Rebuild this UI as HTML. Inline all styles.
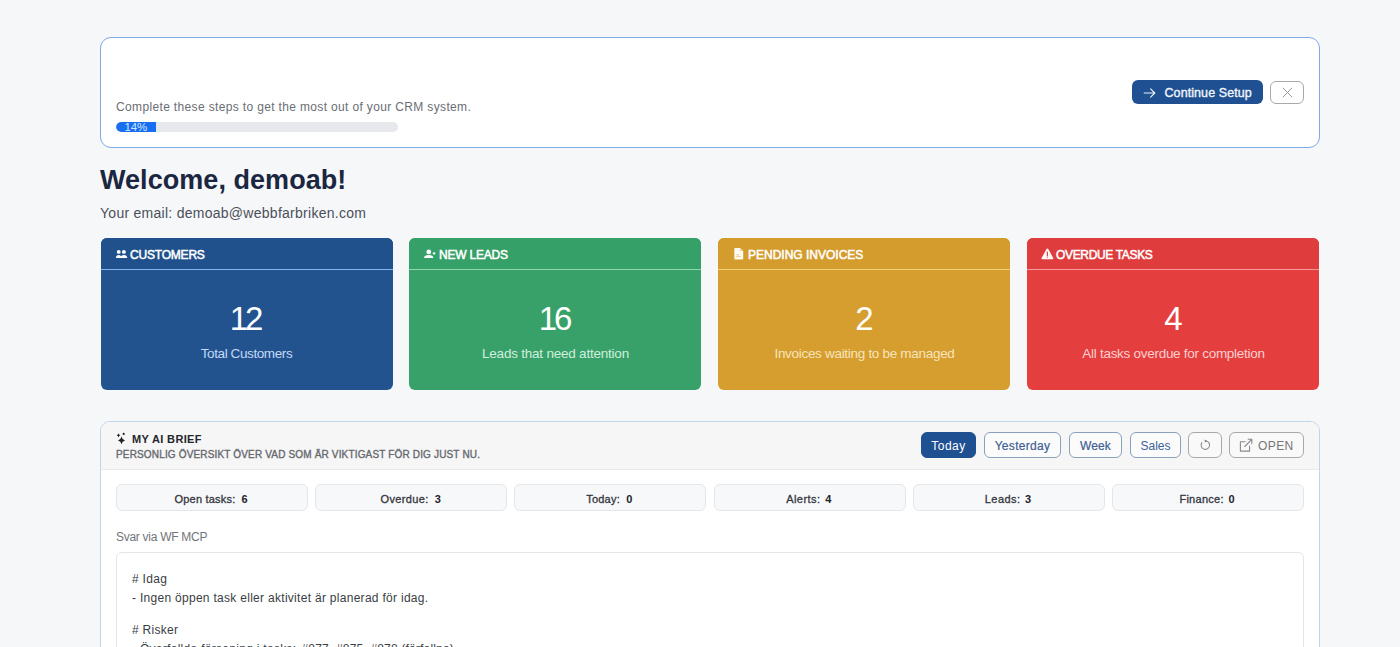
<!DOCTYPE html>
<html><head><meta charset="utf-8">
<style>
*{box-sizing:border-box;margin:0;padding:0}
html,body{width:1400px;height:647px;overflow:hidden;background:#f5f7f9;font-family:"Liberation Sans",sans-serif;color:#1a2238}
.t{position:absolute;white-space:nowrap;line-height:1}
svg{position:absolute;display:block}
#setup{position:absolute;left:100px;top:37px;width:1220px;height:111px;background:#fff;border:1px solid #80a9e8;border-radius:11px}
#bar{position:absolute;left:116px;top:122px;width:282px;height:10px;background:#e6e8ec;border-radius:5px;overflow:hidden}
#fill{position:absolute;left:0;top:0;width:40px;height:10px;background:#176ef0;border-radius:5px 0 0 5px;overflow:hidden}
#cont{position:absolute;left:1132px;top:80px;width:131px;height:24px;background:#1f5092;border-radius:6px}
#close{position:absolute;left:1270px;top:81px;width:34px;height:23px;border:1px solid #a9a9a9;border-radius:6px}
.card{position:absolute;top:238px;width:292px;height:152px;border-radius:6px;overflow:hidden}
.card .hd{position:absolute;left:0;top:0;width:100%;height:32px;border-bottom:1px solid rgba(255,255,255,.5)}
#brief{position:absolute;left:100px;top:421px;width:1220px;height:300px;border:1px solid #c2d3ea;border-radius:10px;background:#fff;overflow:hidden}
#bhd{position:absolute;left:0;top:0;width:100%;height:48px;background:#f6f6f6;border-bottom:1px solid #e9eaec}
.btn{position:absolute;top:432px;height:26px;border:1px solid #8aa0bb;border-radius:6px;background:#fbfbfc}
.pill{position:absolute;top:484px;height:27px;width:192px;background:#f7f8fa;border:1px solid #e4e6ea;border-radius:6px}
#content{position:absolute;left:116px;top:552px;width:1188px;height:200px;border:1px solid #e4e6ea;border-radius:6px;background:#fff}
.lbl{top:494px;font-size:11px;color:#33363c;-webkit-text-stroke:0.3px #33363c}
.val{top:494px;font-size:11px;font-weight:bold;color:#1f2228}
</style></head>
<body>
<div id="setup"></div>
<div class="t" style="left:116px;top:101px;font-size:12px;color:#6a6e75;letter-spacing:0.35px">Complete these steps to get the most out of your CRM system.</div>
<div id="bar"><div id="fill"><div class="t" style="left:8.5px;top:0px;font-size:11.5px;color:#d3e8ff;letter-spacing:-0.2px">14%</div></div></div>
<div id="cont"></div>
<svg style="left:1143px;top:87px" width="13" height="12" viewBox="0 0 13 12"><path d="M1.2 6H11.8M7.6 1.9L11.8 6L7.6 10.1" stroke="#eef3fb" stroke-width="1.1" fill="none" stroke-linecap="round" stroke-linejoin="round"/></svg>
<div class="t" style="left:1164.5px;top:87px;font-size:12.5px;color:#f2f6fc;letter-spacing:0.08px;-webkit-text-stroke:0.35px #f2f6fc">Continue Setup</div>
<div id="close"></div>
<svg style="left:1282px;top:87px" width="11" height="11" viewBox="0 0 11 11"><path d="M0.8 0.8L10.2 10.2M10.2 0.8L0.8 10.2" stroke="#9a9a9a" stroke-width="1" fill="none"/></svg>

<div class="t" style="left:100px;top:167px;font-size:27px;font-weight:bold;color:#1b2640;letter-spacing:0.05px">Welcome, demoab!</div>
<div class="t" style="left:100px;top:206px;font-size:14px;color:#4b505a;letter-spacing:0.27px">Your email: demoab@webbfarbriken.com</div>

<div class="card" style="left:101px;background:#22538f"><div class="hd" style="background:#21518c;border-bottom-color:#8bb4ea"></div></div>
<div class="card" style="left:409px;background:#38a169"><div class="hd" style="background:#35a067;border-bottom-color:#8ed9aa"></div></div>
<div class="card" style="left:718px;background:#d69e2e"><div class="hd" style="background:#d49c2d;border-bottom-color:#f0cf7d"></div></div>
<div class="card" style="left:1027px;background:#e53e3e"><div class="hd" style="background:#df3c3d;border-bottom-color:#f59a98"></div></div>

<!-- card header texts -->
<div class="t" style="left:130px;top:249px;font-size:12px;color:#fff;letter-spacing:-0.2px;-webkit-text-stroke:0.5px #fff">CUSTOMERS</div>
<div class="t" style="left:439px;top:249px;font-size:12px;color:#fff;letter-spacing:-0.2px;-webkit-text-stroke:0.5px #fff">NEW LEADS</div>
<div class="t" style="left:748px;top:249px;font-size:12px;color:#fff;letter-spacing:0px;-webkit-text-stroke:0.5px #fff">PENDING INVOICES</div>
<div class="t" style="left:1056px;top:249px;font-size:12px;color:#fff;letter-spacing:-0.34px;-webkit-text-stroke:0.5px #fff">OVERDUE TASKS</div>

<!-- icons -->
<svg style="left:115px;top:249px" width="13" height="10" viewBox="0 0 13 10"><circle cx="3.7" cy="2.9" r="1.95" fill="#fff"/><circle cx="8.9" cy="2.9" r="1.95" fill="#fff"/><path d="M0.9 9.1C0.9 7.1 2.1 5.9 3.7 5.9S6.5 7.1 6.5 9.1Z" fill="#fff"/><path d="M5.6 9.1C5.6 7.1 7 5.9 8.9 5.9S12.3 7.1 12.3 9.1Z" fill="#fff"/></svg>
<svg style="left:423px;top:249px" width="13" height="10" viewBox="0 0 13 10"><circle cx="5.8" cy="2.9" r="2.4" fill="#fff"/><path d="M1 9C1 7 2.8 5.9 5.8 5.9S10.3 7 10.3 9Z" fill="#fff"/><path d="M11.1 3.1V5.7M9.8 4.4H12.4" stroke="#f0fff6" stroke-width="1.1"/></svg>
<svg style="left:734px;top:248px" width="10" height="12" viewBox="0 0 10 12"><path d="M0.3 1C0.3 0.5 0.7 0.1 1.2 0.1H6.2L9.2 3.1V10.8C9.2 11.3 8.8 11.6 8.3 11.6H1.2C0.7 11.6 0.3 11.3 0.3 10.8Z" fill="#fffbf0"/><path d="M6.2 0.1V3.1H9.2" fill="#eccf8d"/><path d="M2.2 6.8H5M2.2 8.6H6.8" stroke="#e4c37a" stroke-width="0.8"/></svg>
<svg style="left:1041px;top:248px" width="13" height="12" viewBox="0 0 13 12"><path d="M6.4 0.5C6.8 0.5 7.1 0.7 7.3 1L12.2 10C12.5 10.6 12.1 11.2 11.4 11.2H1.4C0.7 11.2 0.3 10.6 0.6 10L5.5 1C5.7 0.7 6 0.5 6.4 0.5Z" fill="#fff8f6"/><path d="M6.4 4.2V7.4" stroke="#d8484a" stroke-width="1.2" stroke-linecap="round"/><circle cx="6.4" cy="9.1" r="0.7" fill="#d8484a"/></svg>

<!-- numbers -->
<div class="t" style="left:100px;width:293px;text-align:center;top:302px;font-size:33px;color:#fff;letter-spacing:-3px;text-indent:-3px">12</div>
<div class="t" style="left:409px;width:293px;text-align:center;top:302px;font-size:33px;color:#fff;letter-spacing:-3px;text-indent:-3px">16</div>
<div class="t" style="left:718px;width:293px;text-align:center;top:302px;font-size:33px;color:#fff">2</div>
<div class="t" style="left:1027px;width:293px;text-align:center;top:302px;font-size:33px;color:#fff">4</div>

<div class="t" style="left:100px;width:293px;text-align:center;top:347px;font-size:13.5px;color:#c3d9f6;letter-spacing:-0.4px">Total Customers</div>
<div class="t" style="left:409px;width:293px;text-align:center;top:347px;font-size:13.5px;color:#d0eede;letter-spacing:-0.22px">Leads that need attention</div>
<div class="t" style="left:718px;width:293px;text-align:center;top:347px;font-size:13.5px;color:#f7e4bd;letter-spacing:-0.3px">Invoices waiting to be managed</div>
<div class="t" style="left:1027px;width:293px;text-align:center;top:347px;font-size:13.5px;color:#fbd0d0;letter-spacing:-0.28px">All tasks overdue for completion</div>

<!-- brief -->
<div id="brief"><div id="bhd"></div></div>
<svg style="left:114px;top:431px" width="14" height="15" viewBox="0 0 14 15"><path d="M7.5 5.6Q8 8.6 11 9.4Q8 10.2 7.5 13.2Q7 10.2 4 9.4Q7 8.6 7.5 5.6Z" fill="#1e2126"/><path d="M4.5 2.2Q4.8 3.9 6.3 4.3Q4.8 4.7 4.5 6.4Q4.2 4.7 2.7 4.3Q4.2 3.9 4.5 2.2Z" fill="#1e2126"/><circle cx="9.7" cy="2.9" r="1.05" fill="#1e2126"/></svg>
<div class="t" style="left:132px;top:434px;font-size:11px;font-weight:bold;color:#23262d;letter-spacing:0.35px">MY AI BRIEF</div>
<div class="t" style="left:116px;top:450px;font-size:10px;color:#66696f;letter-spacing:0.16px;-webkit-text-stroke:0.35px #66696f">PERSONLIG ÖVERSIKT ÖVER VAD SOM ÄR VIKTIGAST FÖR DIG JUST NU.</div>

<div class="btn" style="left:921px;width:55px;background:#1f5092;border-color:#1f5092"></div>
<div class="t" style="left:921px;width:55px;text-align:center;top:440px;font-size:12px;color:#fff;letter-spacing:0.5px">Today</div>
<div class="btn" style="left:984px;width:77px"></div>
<div class="t" style="left:984px;width:77px;text-align:center;top:440px;font-size:12px;color:#3e6192;-webkit-text-stroke:0.2px #3e6192;letter-spacing:0.3px">Yesterday</div>
<div class="btn" style="left:1069px;width:53px"></div>
<div class="t" style="left:1069px;width:53px;text-align:center;top:440px;font-size:12px;color:#3e6192;-webkit-text-stroke:0.2px #3e6192;letter-spacing:0.1px">Week</div>
<div class="btn" style="left:1130px;width:51px"></div>
<div class="t" style="left:1130px;width:51px;text-align:center;top:440px;font-size:12px;color:#3b6199">Sales</div>
<div class="btn" style="left:1188px;width:34px;border-color:#a9a9a9;background:#f9f9f9"></div>
<svg style="left:1199px;top:439px" width="13" height="13" viewBox="0 0 13 13"><path d="M7 1.9A4.25 4.25 0 1 1 2.9 3.6" stroke="#8a8a8a" stroke-width="1.05" fill="none" stroke-linecap="round"/><path d="M5.6 0.6L8.2 1.9L5.9 3.5Z" fill="#7a7a7a"/></svg>
<div class="btn" style="left:1229px;width:75px;border-color:#a9a9a9;background:#f9f9f9"></div>
<svg style="left:1239px;top:438px" width="14" height="14" viewBox="0 0 14 14"><path d="M6.5 3.8H1.4V13.1H10.6V7.8" stroke="#8a8a8a" stroke-width="1.1" fill="none" stroke-linejoin="round"/><path d="M9.2 1.3H12.8V5.6M12.8 1.3L5.8 8.5" stroke="#8a8a8a" stroke-width="1.1" fill="none" stroke-linecap="round" stroke-linejoin="round"/></svg>
<div class="t" style="left:1258px;top:440px;font-size:12px;color:#777;letter-spacing:0.4px">OPEN</div>

<div class="pill" style="left:116px"></div>
<div class="pill" style="left:315px"></div>
<div class="pill" style="left:514px"></div>
<div class="pill" style="left:714px"></div>
<div class="pill" style="left:913px"></div>
<div class="pill" style="left:1112px"></div>
<div class="t lbl" style="left:174.5px;letter-spacing:0.2px">Open tasks:</div><div class="t val" style="left:241.5px">6</div>
<div class="t lbl" style="left:380.5px;letter-spacing:0.38px">Overdue:</div><div class="t val" style="left:434.8px">3</div>
<div class="t lbl" style="left:586.2px;letter-spacing:0.22px">Today:</div><div class="t val" style="left:626.3px">0</div>
<div class="t lbl" style="left:786.2px;letter-spacing:0.45px">Alerts:</div><div class="t val" style="left:825.2px">4</div>
<div class="t lbl" style="left:984.8px;letter-spacing:0.45px">Leads:</div><div class="t val" style="left:1024.9px">3</div>
<div class="t lbl" style="left:1179.4px;letter-spacing:0.28px">Finance:</div><div class="t val" style="left:1228.4px">0</div>
<div class="t" style="left:116px;top:531px;font-size:12px;color:#72757b;letter-spacing:-0.28px">Svar via WF MCP</div>
<div id="content"></div>
<div class="t" style="left:132px;top:573px;font-size:12px;color:#3a3d44;letter-spacing:0.29px">#&nbsp;Idag</div>
<div class="t" style="left:132px;top:592px;font-size:12px;color:#3a3d44;letter-spacing:0.29px">- Ingen öppen task eller aktivitet är planerad för idag.</div>
<div class="t" style="left:132px;top:624px;font-size:12px;color:#3a3d44;letter-spacing:0.29px">#&nbsp;Risker</div>
<div class="t" style="left:132px;top:643px;font-size:12px;color:#3a3d44;letter-spacing:0.29px">- Överfallda försening i tasks:</div><div class="t" style="left:301.5px;top:643px;font-size:12px;color:#3a3d44;letter-spacing:0.18px">#877, #875, #878 (förfallna)</div>
</body></html>
